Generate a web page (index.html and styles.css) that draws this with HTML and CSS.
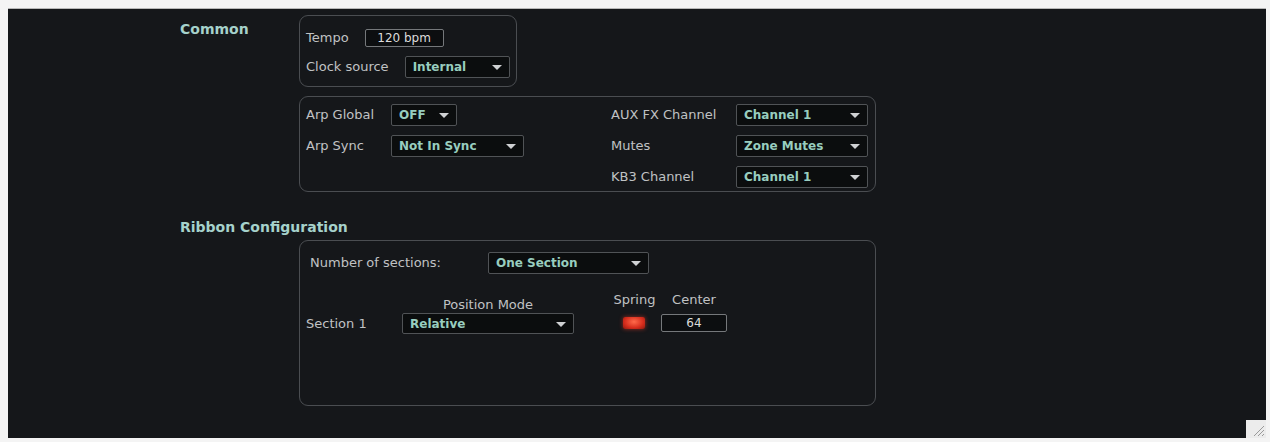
FILE: index.html
```html
<!DOCTYPE html>
<html lang="en">
<head>
    <meta charset="UTF-8">
    <meta name="viewport" content="width=device-width, initial-scale=1.0">
    <title>Global Settings</title>
    <link rel="stylesheet" href="styles.css">
</head>
<body>
    <div class="panel">
        <div class="section common">
            <h2 class="section-title">Common</h2>
            <div class="boxes">
                <div class="group tempo-group">
                    <div class="row">
                        <span class="label">Tempo</span>
                        <span class="field tempo-field">120 bpm</span>
                    </div>
                    <div class="row">
                        <span class="label">Clock source</span>
                        <span class="select clock-select">Internal</span>
                    </div>
                </div>
                <div class="group global-group">
                    <span class="label">Arp Global</span>
                    <span class="select small-select">OFF</span>
                    <span class="label">AUX FX Channel</span>
                    <span class="select">Channel 1</span>

                    <span class="label">Arp Sync</span>
                    <span class="select sync-select">Not In Sync</span>
                    <span class="label">Mutes</span>
                    <span class="select">Zone Mutes</span>

                    <span></span>
                    <span></span>
                    <span class="label">KB3 Channel</span>
                    <span class="select">Channel 1</span>
                </div>
            </div>
        </div>

        <div class="section ribbon">
            <h2 class="section-title">Ribbon Configuration</h2>
            <div class="group ribbon-group">
                <div class="row sections-row">
                    <span class="label">Number of sections:</span>
                    <span class="select sections-select">One Section</span>
                </div>
                <div class="ribbon-grid">
                    <span></span>
                    <span class="label col-label mode-label">Position Mode</span>
                    <span class="label col-label">Spring</span>
                    <span class="label col-label">Center</span>

                    <span class="label">Section 1</span>
                    <span class="select mode-select">Relative</span>
                    <span class="led"></span>
                    <span class="field center-field">64</span>
                </div>
            </div>
        </div>

        <div class="grip">
            <svg width="20" height="18" viewBox="0 0 20 18">
                <path d="M8 16 L18 6 M12 16 L18 10 M16 16 L18 14" stroke="#9a9a9a" stroke-width="1"/>
            </svg>
        </div>
    </div>
</body>
</html>
```

FILE: styles.css
```css
body {
    margin: 0;
    background-color: #f4f4f4;
    font-family: "DejaVu Sans", "Liberation Sans", sans-serif;
}
.panel {
    position: relative;
    margin: 8px 4px 0 8px;
    height: 430px;
    background-color: #15171a;
    border-top: 1px solid #b8b8b8;
    box-sizing: border-box;
    padding-top: 6px;
}
.section-title {
    margin: 0;
    font-size: 14px;
    font-weight: bold;
    color: #a6d2cb;
    line-height: 18px;
}
.common {
    display: grid;
    grid-template-columns: 291px 578px;
}
.common .section-title {
    padding-left: 172px;
    margin-top: 5px;
}
.boxes {
    display: flex;
    flex-direction: column;
    align-items: flex-start;
    gap: 9px;
}
.group {
    border: 1px solid #4a4d51;
    border-radius: 9px;
    box-sizing: border-box;
}
.label {
    font-size: 13px;
    color: #c0c2c4;
    white-space: nowrap;
}
.row {
    display: flex;
    align-items: center;
}
.tempo-group {
    width: 218px;
    height: 72px;
    padding: 10px 6px 0 6px;
    display: flex;
    flex-direction: column;
    gap: 6px;
}
.tempo-group .row {
    height: 23px;
    gap: 16px;
}
.field {
    display: inline-block;
    border: 1px solid #75787b;
    border-radius: 2px;
    background-color: #0c0e10;
    color: #dcdcdc;
    font-size: 12px;
    text-align: center;
    line-height: 16px;
    box-sizing: border-box;
}
.tempo-field {
    width: 79px;
    height: 18px;
}
.select {
    position: relative;
    display: block;
    height: 22px;
    line-height: 20px;
    box-sizing: border-box;
    border: 1px solid #505356;
    border-radius: 2px;
    background-color: #0b0d0e;
    color: #98cdbf;
    font-size: 12px;
    font-weight: bold;
    padding-left: 7px;
    white-space: nowrap;
}
.select::after {
    content: "";
    position: absolute;
    right: 7px;
    top: 8px;
    border-left: 5px solid transparent;
    border-right: 5px solid transparent;
    border-top: 5px solid #cfd1d3;
}
.clock-select {
    width: 107px;
}
.global-group {
    width: 577px;
    height: 96px;
    padding: 6px 8px 0 6px;
    display: grid;
    grid-template-columns: 85px 220px 125px 132px;
    grid-auto-rows: 23px;
    row-gap: 8px;
    align-items: center;
}
.small-select {
    width: 66px;
}
.sync-select {
    width: 133px;
}
.ribbon {
    margin-top: 26px;
}
.ribbon .section-title {
    padding-left: 172px;
}
.ribbon-group {
    margin-left: 291px;
    margin-top: 4px;
    width: 577px;
    height: 166px;
    padding: 10px 6px 0 6px;
}
.sections-row {
    height: 23px;
}
.sections-row .label {
    width: 178px;
    padding-left: 4px;
}
.sections-select {
    width: 161px;
}
.ribbon-grid {
    margin-top: 18px;
    display: grid;
    grid-template-columns: 96px 210px 49px 66px;
    grid-template-rows: 20px 22px;
    align-items: center;
}
.col-label {
    align-self: start;
    text-align: center;
    line-height: 16px;
}
.mode-label {
    width: 172px;
    align-self: end;
    line-height: 16px;
    margin-bottom: -1px;
}
.ribbon-grid .col-label:nth-child(3) {
    width: 45px;
}
.mode-select {
    width: 172px;
    height: 21px;
}
.led {
    width: 22px;
    height: 12px;
    margin-left: 11px;
    border-radius: 2px;
    background: radial-gradient(ellipse at 50% 40%, #ff6a4a, #d62c1c 60%, #8a1a10);
    box-shadow: 0 0 4px rgba(240, 60, 40, 0.6);
}
.center-field {
    width: 66px;
    height: 18px;
    font-size: 12px;
}
.grip {
    position: absolute;
    right: 0;
    bottom: 0;
    width: 20px;
    height: 18px;
    background-color: #ececec;
}
.grip svg {
    display: block;
}
```
